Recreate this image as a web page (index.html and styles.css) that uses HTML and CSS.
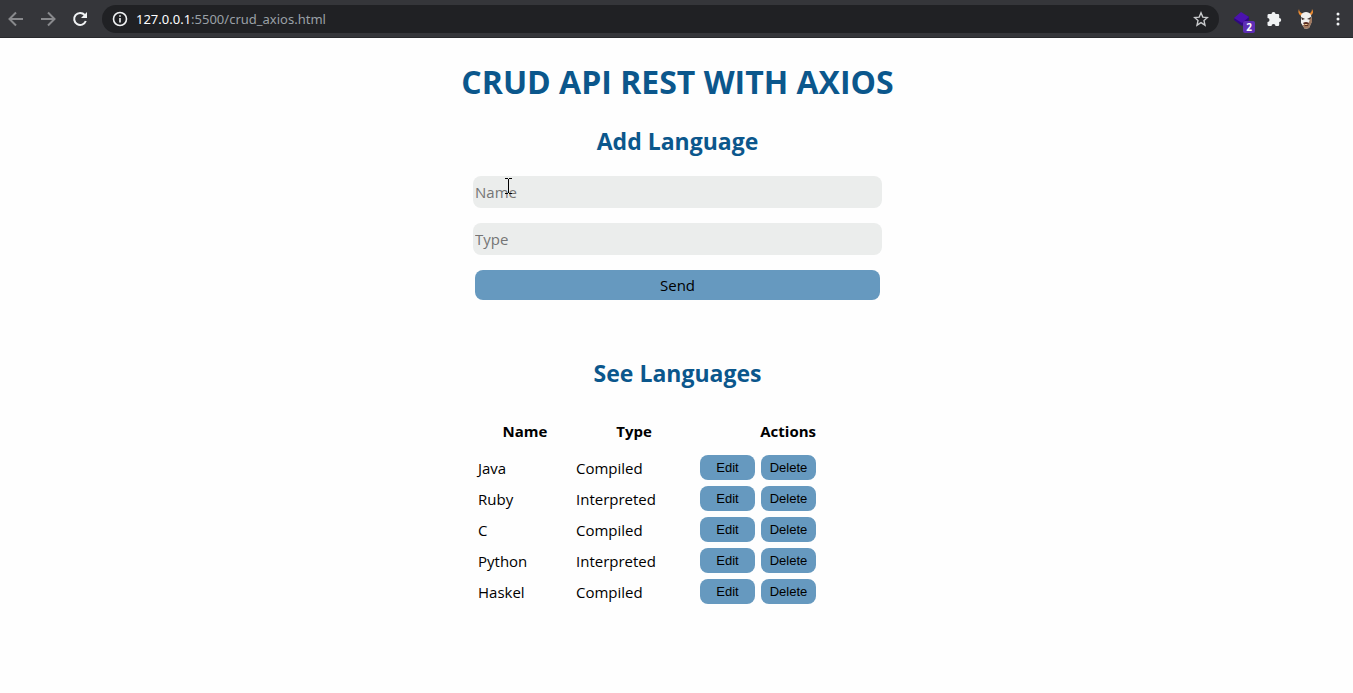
FILE: index.html
```html
<!DOCTYPE html>
<html lang="en">
<head>
<meta charset="utf-8">
<meta name="viewport" content="width=device-width, initial-scale=1">
<title>CRUD API REST with Axios</title>
<link rel="stylesheet" href="styles.css">
</head>
<body>
<header class="toolbar">
  <nav class="nav-buttons" aria-label="Browser navigation">
    <button class="icon-button dim" aria-label="Back"><svg width="16" height="16" viewBox="0 0 16 16" fill="none" stroke="currentColor" stroke-width="2"><path d="M15 8H2M8 1.500 1.500 8 8 14.500"/></svg></button>
    <button class="icon-button dim" aria-label="Forward"><svg width="16" height="16" viewBox="0 0 16 16" fill="none" stroke="currentColor" stroke-width="2"><path d="M1 8h13M8 1.500 14.500 8 8 14.500"/></svg></button>
    <button class="icon-button" aria-label="Reload"><svg width="16" height="16" viewBox="0 0 16 16" fill="none" stroke="currentColor" stroke-width="2"><path d="M12.700 4A6 6 0 1 0 13.800 10"/><path d="M15 1v6H9z" fill="currentColor" stroke="none"/></svg></button>
  </nav>
  <div class="address">
    <svg width="16" height="16" viewBox="0 0 16 16" fill="none" stroke="currentColor" stroke-width="1.600"><circle cx="8" cy="8" r="6.500"/><path d="M8 7v4.500M8 4.200v1.600"/></svg>
    <a class="url" href="#"><span class="host">127.0.0.1</span>:5500/crud_axios.html</a>
    <button class="icon-button star" aria-label="Bookmark"><svg width="16" height="16" viewBox="0 0 16 16" fill="none" stroke="currentColor" stroke-width="1.400"><path d="m8 1.800 1.800 4.300 4.700.4-3.500 3.100 1 4.600-4-2.500-4 2.500 1-4.600L1.500 6.500l4.700-.4z"/></svg></button>
  </div>
  <div class="extensions">
    <button class="icon-button extension" aria-label="Extension, 2 items"><svg width="18" height="18" viewBox="0 0 18 18"><path d="M1 8 8.500 12 16 6v4l-7 6-8-6z" fill="#2f0882"/><path d="M1 8 8 2l8 5-7 6z" fill="#4b12ae"/></svg><span class="badge">2</span></button>
    <button class="icon-button" aria-label="Extensions"><svg width="16" height="16" viewBox="0 0 16 16" fill="#f1f3f4"><path d="M3 3h2.500a2 2 0 0 1 4 0H12q1.200 0 1.200 1.200V7a2 2 0 0 1 0 4v2.800q0 1.200-1.200 1.200H9.500a2 2 0 0 0-4 0H3q-1.500 0-1.500-1.200V11a2 2 0 0 0 0-4V4.200Q1.500 3 3 3z"/></svg></button>
    <button class="icon-button" aria-label="Profile"><svg width="18" height="22" viewBox="0 0 18 22"><path d="M4 8Q0 5 2 1q0 4 5 5zM13 8q5-3 2-7 0 4-4 5z" fill="#e88a32"/><path d="M4 7c2-4 8-4 10 0l1 6-3 7-4 1-4-6z" fill="#efeeec"/><path d="m4 9 4 2-3 1zM14 9l-4 2 4 1z" fill="#3d302c"/><path d="m13 11 2-2v5l-3 6-4 1-3-4h6z" fill="#a07a61"/><path d="M6 15q3-2 6 0l-1 3H8z" fill="#5a2c22"/><path d="M7 16h4l-1 1H8z" fill="#efc98c"/></svg></button>
    <button class="icon-button" aria-label="Menu"><svg width="4" height="16" viewBox="0 0 4 16" fill="currentColor"><circle cx="2" cy="3" r="1.500"/><circle cx="2" cy="8" r="1.500"/><circle cx="2" cy="13" r="1.500"/></svg></button>
  </div>
</header>
<main class="page">
  <h1 class="title">CRUD API REST WITH AXIOS</h1>
  <section>
    <h2 class="subtitle">Add Language</h2>
    <form class="form">
      <div class="field"><input class="text-input" type="text" aria-label="Name" placeholder="Name">
        <svg class="cursor" width="7" height="16" viewBox="0 0 7 16" fill="none" stroke="#000"><path d="M0 .5h3M4 .5h3M3.500 1v14M0 15.500h3M4 15.500h3"/></svg></div>
      <input class="text-input" type="text" aria-label="Type" placeholder="Type">
      <button class="send" type="button">Send</button>
    </form>
  </section>
  <section class="list">
    <h2 class="subtitle">See Languages</h2>
    <table class="languages">
      <thead><tr><th class="col-name">Name</th><th class="col-type">Type</th><th class="col-actions">Actions</th></tr></thead>
      <tbody>
        <tr><td>Java</td><td>Compiled</td><td class="actions"><button class="action">Edit</button><button class="action">Delete</button></td></tr>
        <tr><td>Ruby</td><td>Interpreted</td><td class="actions"><button class="action">Edit</button><button class="action">Delete</button></td></tr>
        <tr><td>C</td><td>Compiled</td><td class="actions"><button class="action">Edit</button><button class="action">Delete</button></td></tr>
        <tr><td>Python</td><td>Interpreted</td><td class="actions"><button class="action">Edit</button><button class="action">Delete</button></td></tr>
        <tr><td>Haskel</td><td>Compiled</td><td class="actions"><button class="action">Edit</button><button class="action">Delete</button></td></tr>
      </tbody>
    </table>
  </section>
</main>
</body>
</html>
```
FILE: styles.css
```css
* { box-sizing: border-box; }
body { margin: 0; background: #fefefe; color: #000; font: 15px/22px "Open Sans", sans-serif; }
button { border: 0; padding: 0; font: inherit; color: inherit; cursor: pointer; }
.toolbar { display: flex; align-items: center; gap: 14px; height: 38px; padding: 0 6px 0 8px; background: #35363a; border-bottom: 1px solid #28292c; color: #f1f3f4; }
.nav-buttons { display: flex; gap: 16px; }
.icon-button { display: flex; justify-content: center; background: none; }
.dim { color: #88898c; }
.address { display: flex; flex: 1; align-items: center; gap: 8px; height: 28px; padding: 0 10px; border-radius: 14px; background: #202124; }
.url { flex: 1; color: #9aa0a6; font: 13px/20px "Noto Sans", sans-serif; text-decoration: none; }
.host { color: #fff; }
.star { color: #c8cacc; }
.extensions { display: flex; align-items: center; gap: 14px; }
.extensions .icon-button { width: 18px; }
.extension { position: relative; }
.badge { position: absolute; left: 10px; top: 11px; width: 12px; height: 12px; border-radius: 2px; background: #5e2eb5; color: #fff; font: bold 10px/12px "Open Sans", sans-serif; text-align: center; }
.page { padding: 20px 16px 20px 18px; }
.title, .subtitle { margin: 0; color: #0b578c; text-align: center; font-weight: 700; }
.title { font-size: 32px; line-height: 48px; }
.subtitle { font-size: 23px; line-height: 32px; padding: 19px 0; }
.form { display: grid; gap: 15px; width: 100%; max-width: 409px; margin: 0 auto; }
.field { position: relative; }
.text-input { display: block; width: 100%; height: 32px; padding: 2px; border: 0; border-radius: 8px; background: #ebedec; font: inherit; }
.text-input::placeholder { color: #757575; opacity: 1; }
.cursor { position: absolute; left: 32px; top: 2px; }
.send { height: 30px; margin: 0 2px; border-radius: 8px; background: #6699bf; }
.list { padding-top: 38px; }
.languages { width: 100%; max-width: 405px; margin: 0 auto; table-layout: fixed; border-collapse: collapse; }
.languages th { height: 45px; padding: 0; text-align: center; }
.languages td { height: 31px; padding: 0 3px 2px; }
.languages .col-name { width: 98px; padding-left: 2px; }
.languages .col-type { width: 122px; }
.languages .col-actions { text-align: right; padding-right: 64px; }
.languages .actions { display: flex; gap: 6px; padding: 2px 0 4px 5px; }
.action { width: 55px; height: 25px; border-radius: 8px; background: #6699bf; font: 13px/25px "Liberation Sans", Arial, sans-serif; }
```
